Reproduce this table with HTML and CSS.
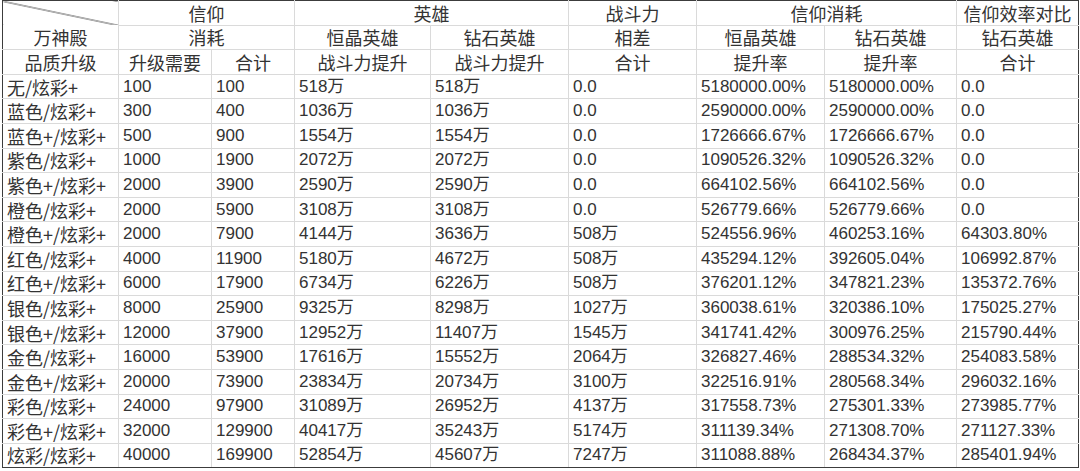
FILE: index.html
```html
<!DOCTYPE html>
<html lang="zh-CN">
<head>
<meta charset="utf-8">
<title>万神殿 品质升级</title>
<link rel="stylesheet" href="styles.css">
</head>
<body>
<table class="sheet">
  <colgroup>
    <col class="c1"><col class="c2"><col class="c3"><col class="c4"><col class="c5"><col class="c6"><col class="c7"><col class="c8"><col class="c9">
  </colgroup>
  <thead>
    <tr>
      <th class="diag"></th>
      <th colspan="2">信仰</th>
      <th colspan="2">英雄</th>
      <th>战斗力</th>
      <th colspan="2">信仰消耗</th>
      <th>信仰效率对比</th>
    </tr>
    <tr>
      <th class="nob">万神殿</th>
      <th colspan="2">消耗</th>
      <th>恒晶英雄</th>
      <th>钻石英雄</th>
      <th>相差</th>
      <th>恒晶英雄</th>
      <th>钻石英雄</th>
      <th>钻石英雄</th>
    </tr>
    <tr>
      <th>品质升级</th>
      <th>升级需要</th>
      <th>合计</th>
      <th>战斗力提升</th>
      <th>战斗力提升</th>
      <th>合计</th>
      <th>提升率</th>
      <th>提升率</th>
      <th>合计</th>
    </tr>
  </thead>
  <tbody>
    <tr><td class="lbl">无/炫彩+</td><td>100</td><td>100</td><td>518万</td><td>518万</td><td>0.0</td><td>5180000.00%</td><td>5180000.00%</td><td>0.0</td></tr>
    <tr><td class="lbl">蓝色/炫彩+</td><td>300</td><td>400</td><td>1036万</td><td>1036万</td><td>0.0</td><td>2590000.00%</td><td>2590000.00%</td><td>0.0</td></tr>
    <tr><td class="lbl">蓝色+/炫彩+</td><td>500</td><td>900</td><td>1554万</td><td>1554万</td><td>0.0</td><td>1726666.67%</td><td>1726666.67%</td><td>0.0</td></tr>
    <tr><td class="lbl">紫色/炫彩+</td><td>1000</td><td>1900</td><td>2072万</td><td>2072万</td><td>0.0</td><td>1090526.32%</td><td>1090526.32%</td><td>0.0</td></tr>
    <tr><td class="lbl">紫色+/炫彩+</td><td>2000</td><td>3900</td><td>2590万</td><td>2590万</td><td>0.0</td><td>664102.56%</td><td>664102.56%</td><td>0.0</td></tr>
    <tr><td class="lbl">橙色/炫彩+</td><td>2000</td><td>5900</td><td>3108万</td><td>3108万</td><td>0.0</td><td>526779.66%</td><td>526779.66%</td><td>0.0</td></tr>
    <tr><td class="lbl">橙色+/炫彩+</td><td>2000</td><td>7900</td><td>4144万</td><td>3636万</td><td>508万</td><td>524556.96%</td><td>460253.16%</td><td>64303.80%</td></tr>
    <tr><td class="lbl">红色/炫彩+</td><td>4000</td><td>11900</td><td>5180万</td><td>4672万</td><td>508万</td><td>435294.12%</td><td>392605.04%</td><td>106992.87%</td></tr>
    <tr><td class="lbl">红色+/炫彩+</td><td>6000</td><td>17900</td><td>6734万</td><td>6226万</td><td>508万</td><td>376201.12%</td><td>347821.23%</td><td>135372.76%</td></tr>
    <tr><td class="lbl">银色/炫彩+</td><td>8000</td><td>25900</td><td>9325万</td><td>8298万</td><td>1027万</td><td>360038.61%</td><td>320386.10%</td><td>175025.27%</td></tr>
    <tr><td class="lbl">银色+/炫彩+</td><td>12000</td><td>37900</td><td>12952万</td><td>11407万</td><td>1545万</td><td>341741.42%</td><td>300976.25%</td><td>215790.44%</td></tr>
    <tr><td class="lbl">金色/炫彩+</td><td>16000</td><td>53900</td><td>17616万</td><td>15552万</td><td>2064万</td><td>326827.46%</td><td>288534.32%</td><td>254083.58%</td></tr>
    <tr><td class="lbl">金色+/炫彩+</td><td>20000</td><td>73900</td><td>23834万</td><td>20734万</td><td>3100万</td><td>322516.91%</td><td>280568.34%</td><td>296032.16%</td></tr>
    <tr><td class="lbl">彩色/炫彩+</td><td>24000</td><td>97900</td><td>31089万</td><td>26952万</td><td>4137万</td><td>317558.73%</td><td>275301.33%</td><td>273985.77%</td></tr>
    <tr><td class="lbl">彩色+/炫彩+</td><td>32000</td><td>129900</td><td>40417万</td><td>35243万</td><td>5174万</td><td>311139.34%</td><td>271308.70%</td><td>271127.33%</td></tr>
    <tr><td class="lbl">炫彩/炫彩+</td><td>40000</td><td>169900</td><td>52854万</td><td>45607万</td><td>7247万</td><td>311088.88%</td><td>268434.37%</td><td>285401.94%</td></tr>
  </tbody>
</table>
</body>
</html>
```
FILE: styles.css
```css
html, body {
  margin: 0;
  padding: 0;
  background: #ffffff;
}

body {
  padding: 0 2px;
  font-family: "Liberation Sans", "Noto Sans CJK SC", sans-serif;
  color: #333333;
}

.sheet {
  width: 1076px;
  table-layout: fixed;
  border-collapse: collapse;
  border: 1px solid #3c3c3c;
}

.c1 { width: 116px; }
.c2 { width: 93px; }
.c3 { width: 83px; }
.c4 { width: 136px; }
.c5 { width: 138px; }
.c6 { width: 128px; }
.c7 { width: 128px; }
.c8 { width: 132px; }
.c9 { width: 122px; }

.sheet tr {
  height: 24.6px;
}

.sheet th,
.sheet td {
  border: 1px solid #dadada;
  padding: 0 4px;
  line-height: 22px;
  white-space: nowrap;
  overflow: hidden;
  vertical-align: middle;
}

.sheet th {
  font-family: "Noto Sans CJK SC", sans-serif;
  font-weight: normal;
  font-size: 18px;
  text-align: center;
}

.sheet td {
  font-size: 17px;
  text-align: left;
}

.sheet td.lbl {
  font-family: "Noto Sans CJK SC", sans-serif;
  font-size: 18px;
}

.sheet th.diag {
  border-bottom-color: transparent;
  background: linear-gradient(to top right, transparent calc(50% - 0.8px), #3c3c3c 50%, transparent calc(50% + 0.8px));
}

.sheet th.nob {
  border-top-color: transparent;
}

.sheet tr > :first-child {
  border-left: 1px solid #3c3c3c;
}

.sheet tr > :last-child {
  border-right: 1px solid #3c3c3c;
}

.sheet tbody tr:last-child td {
  border-bottom: 1px solid #3c3c3c;
}

.sheet thead tr:first-child th {
  border-top: 1px solid #3c3c3c;
}
```
